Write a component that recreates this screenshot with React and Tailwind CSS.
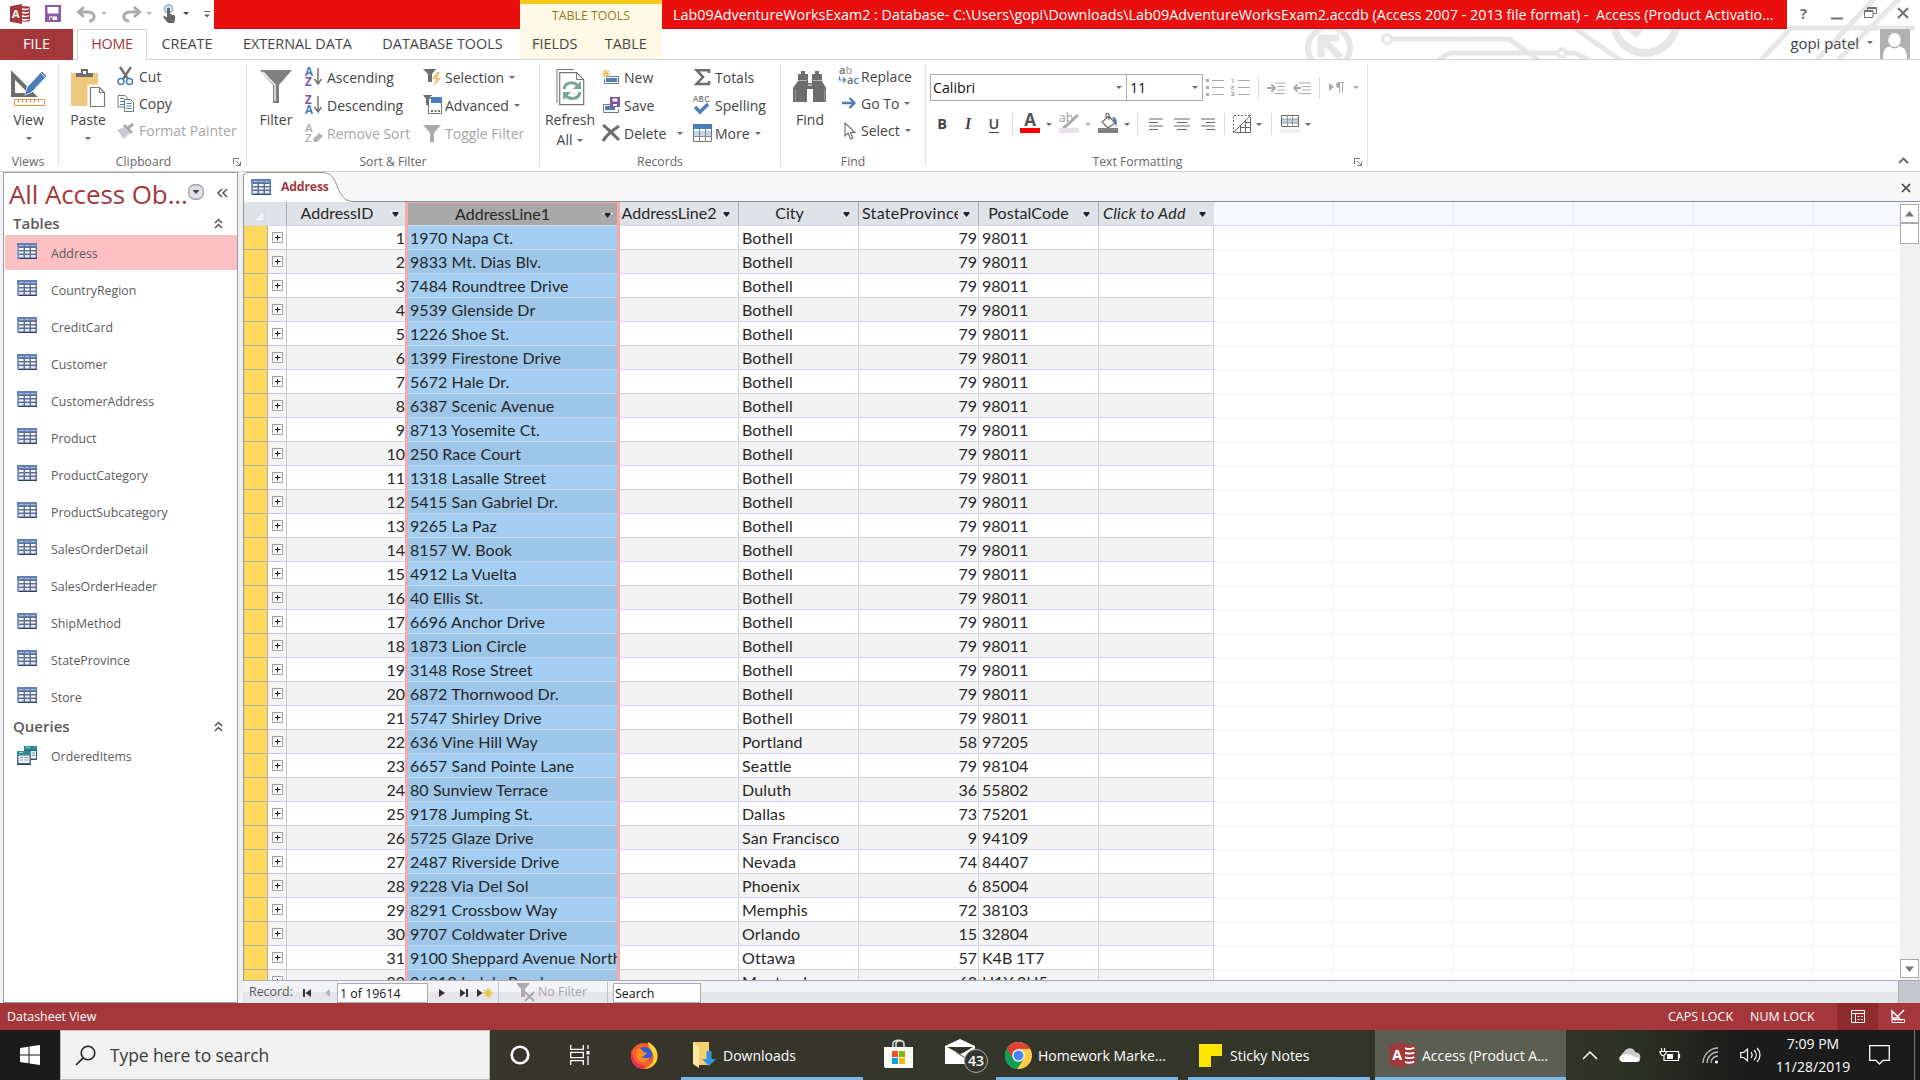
import React from "react";

const ADDRESSES = [
  ["1970 Napa Ct.", "Bothell", 79, "98011"],
  ["9833 Mt. Dias Blv.", "Bothell", 79, "98011"],
  ["7484 Roundtree Drive", "Bothell", 79, "98011"],
  ["9539 Glenside Dr", "Bothell", 79, "98011"],
  ["1226 Shoe St.", "Bothell", 79, "98011"],
  ["1399 Firestone Drive", "Bothell", 79, "98011"],
  ["5672 Hale Dr.", "Bothell", 79, "98011"],
  ["6387 Scenic Avenue", "Bothell", 79, "98011"],
  ["8713 Yosemite Ct.", "Bothell", 79, "98011"],
  ["250 Race Court", "Bothell", 79, "98011"],
  ["1318 Lasalle Street", "Bothell", 79, "98011"],
  ["5415 San Gabriel Dr.", "Bothell", 79, "98011"],
  ["9265 La Paz", "Bothell", 79, "98011"],
  ["8157 W. Book", "Bothell", 79, "98011"],
  ["4912 La Vuelta", "Bothell", 79, "98011"],
  ["40 Ellis St.", "Bothell", 79, "98011"],
  ["6696 Anchor Drive", "Bothell", 79, "98011"],
  ["1873 Lion Circle", "Bothell", 79, "98011"],
  ["3148 Rose Street", "Bothell", 79, "98011"],
  ["6872 Thornwood Dr.", "Bothell", 79, "98011"],
  ["5747 Shirley Drive", "Bothell", 79, "98011"],
  ["636 Vine Hill Way", "Portland", 58, "97205"],
  ["6657 Sand Pointe Lane", "Seattle", 79, "98104"],
  ["80 Sunview Terrace", "Duluth", 36, "55802"],
  ["9178 Jumping St.", "Dallas", 73, "75201"],
  ["5725 Glaze Drive", "San Francisco", 9, "94109"],
  ["2487 Riverside Drive", "Nevada", 74, "84407"],
  ["9228 Via Del Sol", "Phoenix", 6, "85004"],
  ["8291 Crossbow Way", "Memphis", 72, "38103"],
  ["9707 Coldwater Drive", "Orlando", 15, "32804"],
  ["9100 Sheppard Avenue North", "Ottawa", 57, "K4B 1T7"],
  ["26910 Indela Road", "Montreal", 63, "H1Y 2H5"],
];

const TABLES = [
  "Address", "CountryRegion", "CreditCard", "Customer", "CustomerAddress", "Product",
  "ProductCategory", "ProductSubcategory", "SalesOrderDetail", "SalesOrderHeader",
  "ShipMethod", "StateProvince", "Store",
];

function Icon({ w, h, className = "", children }) {
  return (
    <svg width={w} height={h} viewBox={`0 0 ${w} ${h}`} fill="none" className={`shrink-0 overflow-visible ${className}`}>
      {children}
    </svg>
  );
}

function Caret({ className = "text-[#6a6a6a]" }) {
  return (
    <Icon w={6} h={3} className={className}>
      <path d="M0 0h6L3 3z" fill="currentColor" />
    </Icon>
  );
}

/* ---------- title bar and tabs ---------- */

function AccessLogo({ w = 20, h = 20 }) {
  return (
    <svg width={w} height={h} viewBox="0 0 20 20" className="shrink-0 overflow-visible">
      <path d="M10 3.500c0-1.600 10-1.600 10 0v13c0 1.600-10 1.600-10 0z" fill="#a4373a" />
      <path d="M11 4.500c2 1.200 6.500 1.200 8 0M11 8c2 1.200 6.500 1.200 8 0M11 11.500c2 1.200 6.500 1.200 8 0M11 15c2 1.200 6.500 1.200 8 0" stroke="#fff" strokeWidth="1.500" fill="none" />
      <path d="M0 2.200L12 0v20L0 17.800z" fill="#a4373a" />
      <text x="5.900" y="14" fontSize="11" fontWeight="700" textAnchor="middle" fill="#fff" fontFamily="Open Sans">A</text>
    </svg>
  );
}

function CircuitArt() {
  return (
    <svg width="620" height="59" viewBox="1300 0 620 59" fill="none" stroke="#e7e7e7" strokeWidth="5" className="absolute right-0 top-0">
      <circle cx="1329" cy="48" r="21" strokeWidth="6" />
      <path d="M1321 57V38h18M1322 39l19 19" strokeWidth="7" />
      <circle cx="1387" cy="39" r="4.500" strokeWidth="3.500" />
      <path d="M1392 39h117l30 21M1438 60l12-7h107M1567 53h8l14 7M1570 25l50 35" />
      <circle cx="1562" cy="53" r="4" strokeWidth="3.500" />
      <circle cx="1645" cy="22" r="31" strokeWidth="8" />
      <path d="M1627 26l9 8 13-15" strokeWidth="6" />
      <path d="M1915 28h-124l-30 32M1875-2l-58 62M1900-2l-62 62" />
    </svg>
  );
}

function TitleBar() {
  return (
    <div className="flex h-[29px] relative">
      <div className="flex w-[214px] items-center pb-[2px] pl-[10px]">
        <AccessLogo />
        <Icon w={16} h={17} className="ml-[15px]">
          <path d="M0 0h16v17H0z" fill="#8c5aa8" />
          <path d="M2.500 2h11v6.500h-11zM4 11.500h8V15H4z" fill="#fff" />
          <path d="M5 12.500h2.500V16H5z" fill="#8c5aa8" />
        </Icon>
        <Icon w={19} h={16} className="ml-[16px]">
          <path d="M7 1L1.500 6 7 11M2 6h9c8 0 8 9 1 9" stroke="#ababab" strokeWidth="3" />
        </Icon>
        <span className="ml-[5px]"><Caret className="text-[#b5b5b5]" /></span>
        <Icon w={19} h={16} className="ml-[15px]">
          <path d="M12 1l5.500 5L12 11M17 6H8c-8 0-8 9-1 9" stroke="#ababab" strokeWidth="3" />
        </Icon>
        <span className="ml-[5px]"><Caret className="text-[#b5b5b5]" /></span>
        <Icon w={15} h={19} className="ml-[10px]">
          <circle cx="6.500" cy="5" r="3.800" stroke="#9cc3e0" strokeWidth="2.200" />
          <path d="M5 5c0-2 3-2 3 0v5l5 1.500v4L12 19H6l-5-6 1.500-1L5 13.500z" fill="#666" />
        </Icon>
        <span className="ml-[6px]"><Caret className="text-[#444]" /></span>
        <Icon w={6} h={7} className="ml-[15px] mt-[2px]">
          <path d="M0 .5h6" stroke="#666" /><path d="M0 3.500h6l-3 3z" fill="#666" />
        </Icon>
      </div>
      <div className="w-[306px] border-b border-[#c90c0c] bg-[#ea0f0f]" />
      <div className="flex w-[142px] justify-center border-t-4 border-[#f6c91b] bg-[#fff9e5] pt-[2px] text-[12.300px] leading-[19px] text-[#97791b]">
        TABLE TOOLS
      </div>
      <div className="flex w-[1125px] items-center whitespace-pre border-b border-[#c90c0c] bg-[#ea0f0f] pl-[11px] pt-[1px] text-[14.350px] text-white">
        {"Lab09AdventureWorksExam2 : Database- C:\\Users\\gopi\\Downloads\\Lab09AdventureWorksExam2.accdb (Access 2007 - 2013 file format) -  Access (Product Activatio..."}
      </div>
      <div className="flex flex-1 items-center pb-[3px] pl-[13px] text-[#717171]">
        <span className="w-[9px] text-[15px] font-bold leading-none">?</span>
        <Icon w={12} h={12} className="ml-[22px] mt-[2px]"><path d="M0 10.500h12" stroke="currentColor" strokeWidth="2" /></Icon>
        <Icon w={13} h={12} className="ml-[21px]"><path d="M3.500 3V.5h9v6H9M.5 3.500H9v7H.5zM.5 4.500H9M4 1.500h8" stroke="currentColor" /></Icon>
        <Icon w={12} h={12} className="ml-[20px]"><path d="M1 1l10 10M11 1L1 11" stroke="currentColor" strokeWidth="2" /></Icon>
      </div>
    </div>
  );
}

function RibbonTabs() {
  return (
    <div className="relative flex h-[31px] border-b border-[#d4d4d4] text-[14.400px] leading-[30px] text-[#444]">
      <div className="-mb-px w-[73px] bg-[#a4373a] text-center text-white">FILE</div>
      <div className="-mb-px ml-[4px] w-[70px] border-x border-t border-[#d4d4d4] bg-white text-center leading-[28px] tracking-[-0.300px] text-[#a4373a]">HOME</div>
      <div className="w-[80px] text-center">CREATE</div>
      <div className="w-[141px] text-center">EXTERNAL DATA</div>
      <div className="w-[149px] text-center">DATABASE TOOLS</div>
      <div className="ml-[3px] flex w-[142px] bg-[#fff9e5]">
        <div className="w-[71px] text-center">FIELDS</div>
        <div className="w-[74px] text-center">TABLE</div>
      </div>
      <div className="flex flex-1 items-start justify-end pr-[10px]">
        <span className="text-[14.900px] leading-[29px]">gopi patel</span>
        <span className="ml-[8px] mt-[12px] flex"><Caret /></span>
        <Icon w={30} h={30} className="ml-[7px]">
          <path d="M0 0h30v30H0z" fill="#b1b1b1" />
          <ellipse cx="14.500" cy="11" rx="6.200" ry="7" fill="#fff" />
          <path d="M3 30c0-9 2-12 7-12.500 3 2.500 6 2.500 9 0 5 .5 8 3.500 8 12.500z" fill="#fff" />
        </Icon>
      </div>
    </div>
  );
}

/* ---------- ribbon ---------- */

function Group({ className, label, launcher, children }) {
  return (
    <div className={`flex h-[102px] flex-col border-r border-[#e1e1e1] ${className}`}>
      <div className="flex h-[88px] shrink-0 items-start">{children}</div>
      <div className="relative text-center text-[12.200px] leading-[20px] text-[#666]">
        {label}
        {launcher && (
          <Icon w={8} h={8} className="absolute right-[5px] top-[6px]">
            <path d="M.5 6V.5H6M3 3l4 4M7.500 3.500v4h-4" stroke="#777" />
          </Icon>
        )}
      </div>
    </div>
  );
}

function BigButton({ className, icon, label, second, caret }) {
  return (
    <div className={`flex shrink-0 flex-col items-center text-[14px] leading-[20px] text-[#444] ${className}`}>
      <div className="flex h-[42px] items-start">{icon}</div>
      <span className="whitespace-nowrap">{label}</span>
      {second && <span className="flex items-center gap-[5px]">{second} <Caret /></span>}
      {caret && <span className="mt-[7px]"><Caret /></span>}
    </div>
  );
}

function SmallButton({ icon, label, caret, wideCaret, disabled }) {
  return (
    <div className={`flex h-full items-center whitespace-nowrap pb-[2px] text-[14px] ${disabled ? "text-[#a6a6a6]" : "text-[#444]"}`}>
      <span className="flex w-[22px] shrink-0 items-center">{icon}</span>
      {label}
      {caret && <span className={wideCaret ? "ml-[11px]" : "ml-[5px]"}><Caret /></span>}
    </div>
  );
}

const viewIcon = (
  <Icon w={36} h={38}>
    <path d="M2 7l20 20H2z" stroke="#6d6d6d" strokeWidth="4" />
    <path d="M14 27l2-8L31 3l5 5-15 16z" fill="#4a7ebb" stroke="#fff" />
    <path d="M14 27l2-7 4 4z" fill="#4a7ebb" /><path d="M29 4l5 5" stroke="#fff" />
    <path d="M3.500 31.500h30v6h-30zM7.500 31.500v3M11.500 31.500v3M15.500 31.500v3M19.500 31.500v3M23.500 31.500v3M27.500 31.500v3" stroke="#e8914a" />
  </Icon>
);
const pasteIcon = (
  <Icon w={35} h={40}>
    <path d="M0 5h27v33H0z" fill="#edc87e" />
    <path d="M5 9V5h5V1h7v4h5v4z" fill="#6d6d6d" /><path d="M12 3h3v3h-3z" fill="#fff" />
    <path d="M18.500 18.500h10l5 5v15h-15z" fill="#fff" stroke="#fff" strokeWidth="4" />
    <path d="M19.500 19.500h9l5 5v14h-14zM28.500 19.500v5h5" fill="#fff" stroke="#777" strokeWidth="1.200" />
  </Icon>
);
const cutIcon = (
  <Icon w={17} h={19}>
    <path d="M3 0l8 12M14 0L6 12" stroke="#6d6d6d" strokeWidth="2.300" />
    <circle cx="4" cy="14.500" r="3" stroke="#4a7ebb" strokeWidth="1.500" /><circle cx="12.500" cy="14.500" r="3" stroke="#4a7ebb" strokeWidth="1.500" />
  </Icon>
);
const copyIcon = (
  <Icon w={18} h={19}>
    <path d="M1 1.500h7l2 2V13H1z" fill="#fff" stroke="#777" /><path d="M3 4.500h4M3 7.500h4M3 10.500h4" stroke="#4a7ebb" />
    <path d="M7.500 5.500h6l3 3v9h-9z" fill="#fff" stroke="#777" /><path d="M9.500 9.500h5M9.500 12h5M9.500 14.500h5" stroke="#4a7ebb" />
  </Icon>
);
const painterIcon = (
  <Icon w={17} h={16}>
    <path d="M0 7l7-3 6 6-6 6z" fill="#cfcad2" /><path d="M6 3l2-2 8 8-2 2z" fill="#aaa" /><path d="M11 5l5-4" stroke="#aaa" strokeWidth="3" />
  </Icon>
);
const filterIcon = (
  <Icon w={32} h={34}>
    <path d="M0 0h32L19 15v18h-6V15z" fill="#808080" /><path d="M3 2l12 13v16" stroke="#fff" strokeWidth="1.300" />
  </Icon>
);
function SortIcon({ top, bottom, topColor, bottomColor }) {
  return (
    <Icon w={18} h={20}>
      <text x="0" y="9" fontSize="11.500" fontWeight="700" fill={topColor} fontFamily="Open Sans">{top}</text>
      <text x="0" y="19" fontSize="11.500" fontWeight="700" fill={bottomColor} fontFamily="Open Sans">{bottom}</text>
      <path d="M13 1v15M9.500 12l3.500 5 3.500-5" stroke="#6d6d6d" strokeWidth="1.400" />
    </Icon>
  );
}
const removeSortIcon = (
  <Icon w={18} h={20}>
    <text x="0" y="9" fontSize="11.500" fontWeight="600" fill="#ababab" fontFamily="Open Sans">A</text>
    <text x="0" y="19" fontSize="11.500" fontWeight="600" fill="#ababab" fontFamily="Open Sans">Z</text>
    <path d="M8 16l6-6 4 3-6 6H9z" fill="#b3b3b3" />
  </Icon>
);
const selectionIcon = (
  <Icon w={19} h={19}>
    <path d="M0 1h13L9 6v8H5V6z" fill="#6d6d6d" /><path d="M14 4l-5 7h4l-3 8 8-9h-4l3-6z" fill="#edc070" />
  </Icon>
);
const advancedIcon = (
  <Icon w={19} h={20}>
    <path d="M5.500 3.500h13v15h-13z" fill="#fff" stroke="#777" /><path d="M8 2h11v6H8z" fill="#4a7ebb" />
    <path d="M0 0h9L6 4v6H3V4z" fill="#6d6d6d" /><path d="M8 15h2v2H8zM11.500 15h2v2h-2zM15 15h2v2h-2z" fill="#777" />
  </Icon>
);
const toggleIcon = (
  <Icon w={18} h={17}><path d="M0 0h18l-7 8v9H7V8z" fill="#ababab" /></Icon>
);
const refreshIcon = (
  <Icon w={29} h={38}>
    <path d="M1 35V1.500h17" stroke="#777" /><path d="M3.700 4.700h17l7 7v25h-24z" fill="#fff" stroke="#777" strokeWidth="1.200" /><path d="M20.500 4.500v7h7" stroke="#777" />
    <path d="M8 21c1-7 10-8 14-3M24 24c-1 8-11 8-15 3" stroke="#77a896" strokeWidth="3" />
    <path d="M25 13v8h-8zM7 32v-8h8z" fill="#77a896" />
  </Icon>
);
const newIcon = (
  <Icon w={17} h={16}>
    <path d="M4.500 7.500h12v7h-14V10" stroke="#777" fill="#fff" /><path d="M4 9h11v4H4z" fill="#4a7ebb" />
    <path d="M4 0v9M0 4.500h8M1 1.500l6 6M7 1.500l-6 6" stroke="#edc070" strokeWidth="1.300" />
  </Icon>
);
const saveRecIcon = (
  <Icon w={19} h={17}>
    <path d="M8 7.500H1.500v8h15V12" stroke="#777" fill="#fff" /><path d="M3 9h10v4H3z" fill="#4a7ebb" />
    <path d="M8 0h10v10H8z" fill="#8052a0" /><path d="M10.500 1.500h5v3h-5zM11 7h4v2h-4z" fill="#fff" />
  </Icon>
);
const deleteIcon = (
  <Icon w={19} h={18}><path d="M1 1c5 4 10 9 16 15M17 2C11 6 5 10 1 17" stroke="#6d6d6d" strokeWidth="3" /></Icon>
);
const sigmaIcon = (
  <Icon w={17} h={17} className="ml-[1px]"><path d="M15 4V1.200H2.500L9 8l-6.500 7H15v-3" stroke="#6d6d6d" strokeWidth="2.500" /></Icon>
);
const spellIcon = (
  <Icon w={18} h={20}>
    <text x="0" y="7" fontSize="8" fontWeight="600" letterSpacing="0.300" fill="#777" fontFamily="Open Sans">ABC</text>
    <path d="M2 12l5 5 8-8" stroke="#4a7ebb" strokeWidth="3.500" />
  </Icon>
);
const moreIcon = (
  <Icon w={19} h={18}>
    <path d="M.5.500h18v17H.5z" fill="#fff" stroke="#777" /><path d="M0 0h19v5H0z" fill="#4a7ebb" /><path d="M1 7h17v5H1z" fill="#c3d5ea" />
    <path d="M6.500 5v12M12.500 5v12M0 12.500h19" stroke="#888" />
  </Icon>
);
const findIcon = (
  <Icon w={34} h={32}>
    <path d="M5 3h3V0h4v3h3v9h4V3h3V0h4v3h3v7l4 7v14H20V18h-6v13H0V17l5-7z" fill="#6d6d6d" />
    <path d="M5 9.500h9M20 9.500h9" stroke="#fff" opacity=".5" /><path d="M15 14h4" stroke="#fff" /><path d="M2.500 18v12M31.500 18v12" stroke="#999" />
  </Icon>
);
const replaceIcon = (
  <Icon w={21} h={20}>
    <text x="0" y="8" fontSize="11" fontWeight="600" fill="#6d6d6d" fontFamily="Open Sans">a<tspan fill="#aaa">b</tspan></text>
    <text x="8" y="18" fontSize="11" fontWeight="600" fill="#6d6d6d" fontFamily="Open Sans">a<tspan fill="#4a7ebb">c</tspan></text>
    <path d="M.5 10.500v3.500h5M4 11.500L6.500 14 4 16.500" stroke="#4a7ebb" strokeWidth="1.200" />
  </Icon>
);
const gotoIcon = (
  <Icon w={15} h={12} className="ml-[3px]"><path d="M0 6h12M7.500 1l5 5-5 5" stroke="#4a7ebb" strokeWidth="2.300" /></Icon>
);
const selectIcon = (
  <Icon w={13} h={18} className="ml-[5px]"><path d="M1 1v13l3-3 2.500 6 2.300-1L6.500 10.500H11z" stroke="#6d6d6d" strokeWidth="1.100" /></Icon>
);

function Slot({ className, children }) {
  return <span className={`flex h-full shrink-0 items-center justify-center ${className}`}>{children}</span>;
}
function Divider({ className }) {
  return <span className={`h-[22px] w-px shrink-0 bg-[#dadada] ${className}`} />;
}

function TextFormatting() {
  return (
    <div className="flex flex-col pl-[4px] pt-[10px]">
      <div className="flex h-[27px] items-center">
        <div className="flex h-[27px] w-[197px] items-center justify-between border border-[#ababab] pl-[2px] pr-[4px] text-[14.200px] text-[#111]">
          Calibri <Caret />
        </div>
        <div className="-ml-px flex h-[27px] w-[77px] items-center justify-between border border-[#ababab] pl-[3px] pr-[4px] text-[14.200px] text-[#111]">
          11 <Caret />
        </div>
        <Icon w={18} h={18} className="ml-[3px] -mt-[1px]">
          <path d="M6 2.500h12M6 9.500h12M6 16.500h12" stroke="#ababab" strokeWidth="1.200" /><path d="M0 1h3v3H0zM0 8h3v3H0zM0 15h3v3H0z" fill="#ababab" />
        </Icon>
        <Icon w={19} h={18} className="ml-[7px] -mt-[1px]">
          <path d="M7 2.500h12M7 9.500h12M7 16.500h12" stroke="#ababab" strokeWidth="1.200" />
          <path d="M.5 1.500H2V5M.5 8h2v1.500h-2V11.500h3M0 14.500h3v3H0M1 16h2" stroke="#ababab" />
        </Icon>
        <Divider className="ml-[8px]" />
        <Icon w={18} h={12} className="ml-[8px]">
          <path d="M8 1h10M10 4.500h8M10 8h8M8 11.500h10" stroke="#ababab" /><path d="M0 6h8M4.500 2.500L8 6 4.500 9.500" stroke="#ababab" strokeWidth="2" />
        </Icon>
        <Icon w={18} h={12} className="ml-[8px]">
          <path d="M6 1h12M9 4.500h9M9 8h9M6 11.500h12" stroke="#ababab" /><path d="M8 6H1M4.500 2.500L1 6l3.500 3.500" stroke="#ababab" strokeWidth="2" />
        </Icon>
        <Divider className="ml-[8px]" />
        <Icon w={15} h={11} className="ml-[9px]">
          <path d="M0 1l5 4-5 4zM10 0c-4 0-4 6 0 6z" fill="#ababab" /><path d="M10.500 0v11M13.500 0v11M9 .5h6" stroke="#ababab" />
        </Icon>
        <span className="ml-[9px] -mt-[1px]"><Caret className="text-[#ababab]" /></span>
      </div>
      <div className="mt-[12px] flex h-[22px] items-center text-[#444]">
        <Slot className="w-[24px] text-[14.500px] font-bold">B</Slot>
        <Slot className="w-[28px] font-['Liberation_Serif'] text-[16px] font-bold italic">I</Slot>
        <Slot className="w-[24px] text-[14.500px] font-semibold"><span className="border-b border-[#444] leading-[17px]">U</span></Slot>
        <Divider className="ml-[6px]" />
        <Icon w={20} h={22} className="ml-[7px]">
          <text x="10" y="13" textAnchor="middle" fontSize="17" fontWeight="700" fill="#555" fontFamily="Open Sans">A</text><path d="M0 15h20v5H0z" fill="#fe0000" />
        </Icon>
        <span className="ml-[6px]"><Caret /></span>
        <Icon w={20} h={22} className="ml-[7px]">
          <text x="0" y="9" fontSize="12" fill="#999" fontFamily="Open Sans">ab</text><path d="M19 2L7 13l-3 2" stroke="#aaa" strokeWidth="3" /><path d="M0 15h20v5H0z" fill="#e6e2e8" />
        </Icon>
        <span className="ml-[6px]"><Caret className="text-[#ababab]" /></span>
        <Icon w={20} h={22} className="ml-[7px]">
          <path d="M4 9l7-6 6 7-7 5zM8 6V1.500c0-1.500 3-1.500 3 0V7" stroke="#666" strokeWidth="1.200" /><path d="M14 4c5 0 6 5 4 10-1-5-2-6-4-10z" fill="#4a7ebb" /><path d="M0 15h20v5H0z" fill="#808080" />
        </Icon>
        <span className="ml-[6px]"><Caret /></span>
        <Divider className="ml-[7px]" />
        <Icon w={14} h={12} className="ml-[11px]"><path d="M0 1h14M0 4.500h9M0 8h14M0 11.500h9" stroke="#666" /></Icon>
        <Icon w={16} h={12} className="ml-[11px]"><path d="M0 1h16M3 4.500h10M0 8h16M3 11.500h10" stroke="#666" /></Icon>
        <Icon w={14} h={12} className="ml-[11px]"><path d="M0 1h14M5 4.500h9M0 8h14M5 11.500h9" stroke="#666" /></Icon>
        <Divider className="ml-[9px]" />
        <Icon w={18} h={18} className="ml-[8px]">
          <path d="M.5 17.500V.5h17" stroke="#666" strokeDasharray="2 1.500" /><path d="M0 18L18 0M17.500 2v15.500H2M12.500 6v11M7.500 11v6M7 12.500h10M12 7.500h5" stroke="#666" />
        </Icon>
        <span className="ml-[5px]"><Caret /></span>
        <Divider className="ml-[9px]" />
        <Icon w={20} h={20} className="ml-[8px]">
          <path d="M1.500 1.500h17v11h-17z" fill="#fff" stroke="#666" /><path d="M2 5h16v4H2z" fill="#bcd3ea" /><path d="M7.500 1v12M12.500 1v12M1 5h18M1 9h18" stroke="#888" strokeWidth=".8" /><path d="M0 15h20v4H0z" fill="#eee" />
        </Icon>
        <span className="ml-[5px]"><Caret /></span>
      </div>
    </div>
  );
}

function Ribbon() {
  return (
    <div className="flex h-[112px] border-b border-[#d4d4d4] bg-white pt-[4px]">
      <Group className="w-[59px]" label={<span className="pr-[2px]">Views</span>}>
        <BigButton className="w-[57px] pt-[4px]" icon={viewIcon} label="View" caret />
      </Group>
      <Group className="w-[188px]" label={<span className="pr-[18px]">Clipboard</span>} launcher>
        <BigButton className="w-[57px] pl-[1px] pt-[4px]" icon={pasteIcon} label="Paste" caret />
        <div className="flex flex-col pl-[1px]">
          <div className="h-[26px]"><SmallButton icon={cutIcon} label="Cut" /></div>
          <div className="h-[28px]"><SmallButton icon={copyIcon} label="Copy" /></div>
          <div className="h-[27px]"><SmallButton icon={painterIcon} label="Format Painter" disabled /></div>
        </div>
      </Group>
      <Group className="w-[293px]" label="Sort & Filter">
        <BigButton className="w-[58px] pt-[4px]" icon={<span className="pt-[2px]">{filterIcon}</span>} label="Filter" />
        <div className="flex w-[118px] flex-col">
          <div className="h-[28px]"><SmallButton icon={<SortIcon top="A" bottom="Z" topColor="#4a7ebb" bottomColor="#8052a0" />} label="Ascending" /></div>
          <div className="h-[28px]"><SmallButton icon={<SortIcon top="Z" bottom="A" topColor="#8052a0" bottomColor="#4a7ebb" />} label="Descending" /></div>
          <div className="h-[28px]"><SmallButton icon={removeSortIcon} label="Remove Sort" disabled /></div>
        </div>
        <div className="flex flex-col">
          <div className="h-[28px]"><SmallButton icon={selectionIcon} label="Selection" caret /></div>
          <div className="h-[28px]"><SmallButton icon={advancedIcon} label="Advanced" caret /></div>
          <div className="h-[28px]"><SmallButton icon={toggleIcon} label="Toggle Filter" disabled /></div>
        </div>
      </Group>
      <Group className="w-[241px]" label="Records">
        <BigButton className="w-[60px] pt-[4px]" icon={refreshIcon} label="Refresh" second="All" />
        <div className="flex w-[93px] flex-col pl-[2px]">
          <div className="h-[28px]"><SmallButton icon={newIcon} label="New" /></div>
          <div className="h-[28px]"><SmallButton icon={saveRecIcon} label="Save" /></div>
          <div className="h-[28px]"><SmallButton icon={deleteIcon} label="Delete" caret wideCaret /></div>
        </div>
        <div className="flex flex-col">
          <div className="h-[28px]"><SmallButton icon={sigmaIcon} label="Totals" /></div>
          <div className="h-[28px]"><SmallButton icon={spellIcon} label="Spelling" /></div>
          <div className="h-[28px]"><SmallButton icon={moreIcon} label="More" caret /></div>
        </div>
      </Group>
      <Group className="w-[145px]" label="Find">
        <BigButton className="w-[58px] pt-[4px]" icon={<span className="pt-[3px]">{findIcon}</span>} label="Find" />
        <div className="flex flex-col">
          <div className="h-[26px]"><SmallButton icon={replaceIcon} label="Replace" /></div>
          <div className="h-[28px]"><SmallButton icon={gotoIcon} label="Go To" caret /></div>
          <div className="h-[27px]"><SmallButton icon={selectIcon} label="Select" caret /></div>
        </div>
      </Group>
      <Group className="w-[442px]" label={<span className="pr-[18px]">Text Formatting</span>} launcher>
        <TextFormatting />
      </Group>
      <div className="flex flex-1 items-end justify-end pb-[7px] pr-[11px]">
        <Icon w={11} h={7}><path d="M1 6l4.500-4.500L10 6" stroke="#666" strokeWidth="1.800" /></Icon>
      </div>
    </div>
  );
}

/* ---------- navigation pane ---------- */

function TableIcon() {
  return (
    <Icon w={20} h={16}>
      <path d="M0 0h20v16H0z" fill="#5d6f96" /><path d="M0 0h20v4H0z" fill="#6580b5" /><path d="M0 4h1.500v12H0z" fill="#8fa5cf" />
      <path d="M2 2h4.500v1H2zM8 2h4.500v1H8zM14 2h4.500v1H14z" fill="#a9bbdd" />
      <path d="M2 5h4.500v2H2zM8 5h4.500v2H8zM14 5h4.500v2H14z" fill="#fff" />
      <path d="M2 8.500h4.500v2H2zM8 8.500h4.500v2H8zM14 8.500h4.500v2H14z" fill="#f4f7fc" />
      <path d="M2 12h4.500v2.500H2zM8 12h4.500v2.500H8zM14 12h4.500v2.500H14z" fill="#dfe8f5" />
      <path d="M2 15.500h18" stroke="#2f3f5c" />
    </Icon>
  );
}

function QueryIcon() {
  return (
    <Icon w={20} h={19}>
      <path d="M7 0h13v14H7z" fill="#3c5a72" /><path d="M7 0h13v4H7z" fill="#2c8c8c" /><path d="M8 5h11v7.500H8z" fill="#eef4fb" />
      <path d="M0 5h14v14H0z" fill="#4a6892" /><path d="M0 5h14v4H0z" fill="#2f9090" /><path d="M1.500 9.500h11v7.500h-11z" fill="#f4f8fd" />
      <path d="M3 11.500h3M7.500 11.500h4M3 14h3M7.500 14h4M15 7h3M15 9.500h3" stroke="#7f93b5" /><path d="M0 18.500h14" stroke="#26466a" />
      <path d="M2 6.500h4M9 1.500h4" stroke="#8fd0cc" />
    </Icon>
  );
}

function DoubleUp() {
  return <Icon w={9} h={11}><path d="M1 5l3.500-3.500L8 5M1 10l3.500-3.500L8 10" stroke="#555" strokeWidth="1.500" /></Icon>;
}

function SectionHeading({ children }) {
  return (
    <div className="flex h-[22px] items-center justify-between pl-[9px] pr-[14px]">
      <span className="text-[15px] font-semibold text-[#5a5a5a]">{children}</span>
      <DoubleUp />
    </div>
  );
}

function NavPane() {
  return (
    <div className="ml-[3px] flex w-[235px] flex-col border border-[#9a9ba6] bg-white text-[#5c5c5c]">
      <div className="flex h-[39px] items-center pl-[5px] text-[26px] tracking-[-0.100px] text-[#a4373a]">
        <span className="w-[179px] whitespace-nowrap pt-[4px]">All Access Ob...</span>
        <Icon w={16} h={16} className="-mt-[1px]">
          <rect x=".7" y=".7" width="14.600" height="14.600" rx="6" fill="#e0e2e8" stroke="#a2a5b0" strokeWidth="1.400" /><path d="M4.500 6h7l-3.500 4z" fill="#444" />
        </Icon>
        <Icon w={11} h={10} className="ml-[13px] mt-[1px]"><path d="M5 1L1 5l4 4M10 1L6 5l4 4" stroke="#555" strokeWidth="1.500" /></Icon>
      </div>
      <SectionHeading>Tables</SectionHeading>
      <div className="pt-px">
        {TABLES.map((name, i) => (
          <div key={name} className={`mb-[2px] ml-px flex h-[35px] items-start pl-[12px] pt-[8px] ${i === 0 ? "bg-[#fdc0c2]" : ""}`}>
            <TableIcon />
            <span className="ml-[14px] pt-[2px] text-[12.350px] leading-[17px]">{name}</span>
          </div>
        ))}
      </div>
      <div className="-mt-[1px]"><SectionHeading>Queries</SectionHeading></div>
      <div className="ml-px mt-[9px] flex items-start pl-[12px]">
        <QueryIcon />
        <span className="ml-[14px] pt-[2px] text-[12.350px] leading-[17px]">OrderedItems</span>
      </div>
    </div>
  );
}

/* ---------- datasheet ---------- */

const GRID = "grid grid-cols-[24px_19px_118px_3px_209px_3px_119px_120px_120px_120px_115px_120px_120px_120px_120px_120px_1fr]";

function HeadCaret() {
  return <Icon w={11} h={5}><path d="M0 0h11L5.500 5z" fill="#fff" /><path d="M2.500 0h6v1.500L5.500 5l-3-3.500z" fill="#1d262c" /></Icon>;
}

function Head({ className = "", textClass = "text-center", inset, children }) {
  return (
    <div className={`flex items-center overflow-hidden ${className}`}>
      <span className={`min-w-0 flex-1 overflow-hidden whitespace-nowrap pb-[2px] leading-[21px] ${textClass}`}>{children}</span>
      <span className={`flex w-[20px] shrink-0 justify-center pt-[2px] ${inset ? "pr-[3px]" : ""}`}><HeadCaret /></span>
    </div>
  );
}

function Datasheet() {
  const edge = "border-r border-[#cdd3e4]";
  const faint = "border-r border-[#f1f2f8]";
  const head = "border-r border-[#a9adb5] bg-[#dfe2e6]";
  return (
    <div className="h-[778px] w-[1656px] overflow-hidden bg-white font-['Lato'] text-[16px] text-[#262626]">
      <div className={`${GRID} h-[24px] grid-rows-[23px] border-b border-[#d3d7e4]`}>
        <div className="col-span-2 flex items-end border-r border-[#a9adb5] bg-[#dfe2e6] pb-[4px] pl-[9px]">
          <Icon w={11} h={10}><path d="M0 10L11 0v10z" fill="#f1f3f7" stroke="#c6cbd8" strokeWidth=".7" /></Icon>
        </div>
        <Head className="bg-[#dfe2e6]" textClass="pl-[2px] text-center">AddressID</Head>
        <div className="-mb-px bg-[#f7a8ab]" />
        <Head className="border-t border-[#f7a8ab] bg-[#a9a9a9]">AddressLine1</Head>
        <div className="-mb-px bg-[#f7a8ab]" />
        <Head inset className={head}>AddressLine2</Head>
        <Head inset className={head} textClass="pl-[2px] text-center">City</Head>
        <Head inset className={head} textClass="pl-[3px] tracking-[0.300px]">StateProvince</Head>
        <Head inset className={head} textClass="text-center tracking-[0.100px]">PostalCode</Head>
        <Head inset className="bg-[#dfe2e6]" textClass="pl-[4px] italic tracking-[0.250px]">Click to Add</Head>
        {[0, 1, 2, 3, 4].map((i) => <div key={i} className="border-r border-[#ececf6] bg-[#f7f7fe]" />)}
        <div className="bg-[#f7f7fe]" />
      </div>
      {ADDRESSES.map(([line, city, state, zip], i) => {
        const odd = i % 2 === 1;
        const bg = odd ? "bg-[#f3f3f3]" : "bg-white";
        const line1 = odd ? "bg-[#9dc6e9]" : "bg-[#a4cff2]";
        const rule = "border-b border-[#cdd3e4]";
        return (
          <div key={line} className={`${GRID} h-[24px] grid-rows-[24px] leading-[23px] whitespace-nowrap`}>
            <div className="border-b border-r border-[#aeb0b2] bg-[#ffd95f]" />
            <div className={`flex items-center justify-center border-b border-r border-[#c3c8d6] ${bg}`}>
              <Icon w={11} h={11}><path d="M.5.500h10v10H.5z" fill="#fff" stroke="#a0a0a0" /><path d="M3 5.500h5.500M5.500 3v5.500" stroke="#111" /></Icon>
            </div>
            <div className={`${rule} ${bg} text-right`}>{i + 1}</div>
            <div className="bg-[#f7a8ab]" />
            <div className={`overflow-hidden border-b border-[#c5d6ea] pl-[2px] tracking-[0.080px] ${line1}`}>{line}</div>
            <div className="bg-[#f7a8ab]" />
            <div className={`${rule} ${edge} ${bg}`} />
            <div className={`${rule} ${edge} ${bg} pl-[3px] tracking-[0.150px]`}>{city}</div>
            <div className={`${rule} ${edge} ${bg} pr-[1px] text-right`}>{state}</div>
            <div className={`${rule} ${edge} ${bg} pl-[3px]`}>{zip}</div>
            <div className={`${rule} ${edge} ${bg}`} />
            {[0, 1, 2, 3, 4].map((k) => <div key={k} className={`border-b ${faint}`} />)}
            <div className="border-b border-[#f1f2f8]" />
          </div>
        );
      })}
    </div>
  );
}

function ScrollButton({ up }) {
  return (
    <div className="flex h-[19px] w-[19px] items-center justify-center border border-[#ababab] bg-white">
      <Icon w={9} h={6}><path d={up ? "M0 5.500h9L4.500 0z" : "M0 .5h9L4.500 6z"} fill="#777" /></Icon>
    </div>
  );
}

function RecordBar() {
  return (
    <div className="flex h-[23px] border-t border-[#a9aab4] text-[12.400px] text-[#555]">
      <div className="flex w-[1655px] items-center bg-linear-to-b from-[#f3f4f7] from-50% to-[#e5e6ea] to-50% pl-[6px] pt-[1px]">
        <span className="w-[51px]">Record:</span>
        <Icon w={8} h={8} className="ml-[3px]"><path d="M8 0v8L2.500 4zM0 0h2v8H0z" fill="#333" /></Icon>
        <Icon w={5} h={8} className="ml-[14px]"><path d="M5 0v8L0 4z" fill="#b5b5bd" /></Icon>
        <div className="ml-[7px] h-[20px] w-[91px] border border-[#ababb3] bg-white pl-[2px] leading-[19px] text-[#111]">1 of 19614</div>
        <Icon w={6} h={8} className="ml-[11px]"><path d="M0 0v8l6-4z" fill="#333" /></Icon>
        <Icon w={8} h={8} className="ml-[15px]"><path d="M0 0v8l5.500-4zM6 0h2v8H6z" fill="#333" /></Icon>
        <Icon w={16} h={10} className="ml-[9px]"><path d="M0 1v8l5.500-4z" fill="#333" /><path d="M11 0v10M6 5h10M7.500 1.500l7 7M14.500 1.500l-7 7" stroke="#e8c53d" strokeWidth="1.400" /></Icon>
        <span className="ml-[5px] h-full w-px bg-[#c4c4cc]" />
        <Icon w={19} h={19} className="ml-[17px]"><path d="M0 0h14L9 6v8H5V6z" fill="#ababb0" /><path d="M9 9l9 9M18 9l-9 9" stroke="#ababb0" strokeWidth="2" /></Icon>
        <span className="ml-[3px] w-[69px] text-[#a6a6aa]">No Filter</span>
        <span className="h-full w-px bg-[#c4c4cc]" />
        <div className="ml-[5px] h-[20px] w-[88px] border border-[#ababb3] bg-white pl-[1px] leading-[19px] text-[#111]">Search</div>
      </div>
      <div className="flex-1 border-l border-[#a9aab4] bg-[#c6c7ce]" />
    </div>
  );
}

function DocumentArea() {
  return (
    <div className="ml-[5px] flex flex-1 flex-col">
      <div className="relative flex h-[29px] items-center justify-between bg-[#f7f7f7]">
        <Icon w={110} h={30} className="absolute left-0 top-0 z-10">
          <path d="M.5 30V5C.5 2 2 .5 5 .5h75c17 0 12 28 28 28.500v1z" fill="#fff" /><path d="M.5 30V5C.5 2 2 .5 5 .5h75c17 0 12 28 28 28.500" stroke="#9a9284" />
        </Icon>
        <div className="relative z-20 flex items-center pl-[8px]">
          <TableIcon />
          <span className="ml-[10px] pt-[2px] text-[12.300px] font-bold tracking-[-0.200px] text-[#a4373a]">Address</span>
        </div>
        <Icon w={8} h={8} className="mr-[10px] mt-[2px]"><path d="M0 0l8 8M8 0L0 8" stroke="#444" strokeWidth="1.700" /></Icon>
      </div>
      <div className="flex h-[779px] border-l border-t border-[#8a8f9c]">
        <Datasheet />
        <div className="flex flex-1 flex-col justify-between bg-[#f1f1f1] pb-[2px]">
          <div className="bg-[#f7f7fe] pt-[2px]">
            <ScrollButton up />
            <div className="h-[21px] w-[19px] border border-[#ababab] bg-white" />
          </div>
          <ScrollButton />
        </div>
      </div>
      <RecordBar />
    </div>
  );
}

/* ---------- status bar and taskbar ---------- */

function StatusBar() {
  return (
    <div className="flex h-[27px] items-center bg-[#a4373a] pl-[7px] text-[12.400px] text-white">
      <span className="flex-1 pt-[1px]">Datasheet View</span>
      <span className="w-[82px] pt-[1px] tracking-[0.050px]">CAPS LOCK</span>
      <span className="w-[87px] pt-[1px] tracking-[0.050px]">NUM LOCK</span>
      <div className="flex h-full w-[41px] items-center justify-center bg-[#8f2a2d] pb-[1px]">
        <Icon w={14} h={13}><path d="M.5.500h13v12H.5zM.5 3.500h13M4.500 3.500v9M6.500 6.500h2M10 6.500h2M6.500 9.500h2M10 9.500h2" stroke="#fff" /></Icon>
      </div>
      <Icon w={14} h={13} className="-mt-[1px] ml-[13px] mr-[15px]">
        <path d="M1 1v7h7zM13 0L6 7" stroke="#fff" strokeWidth="1.500" /><path d="M1 9.500h12.500v3H1zM4 10v1M7 10v1M10 10v1" stroke="#fff" />
      </Icon>
    </div>
  );
}

function Task({ className, active, icon, children }) {
  return (
    <div className={`flex h-full shrink-0 items-center border-b-[3px] border-[#76b9ed] pt-[3px] text-[14px] text-white ${active ? "bg-[#5b5e50]" : ""} ${className}`}>
      {icon}
      <span className="whitespace-nowrap">{children}</span>
    </div>
  );
}

function Taskbar() {
  return (
    <div className="flex h-[50px] items-center bg-[linear-gradient(90deg,#1b1b1b_0%,#1b1b1b_3%,#38352a_25%,#34362a_60%,#2f3326_84%,#1b1b1b_91%)]">
      <Icon w={20} h={20} className="ml-[20px]">
        <path d="M0 3l8.500-1.300v7.800H0zM9.500 1.500L20 0v9.500H9.500zM0 10.500h8.500v7.800L0 17zM9.500 10.500H20V20L9.500 18.500z" fill="#fff" />
      </Icon>
      <div className="ml-[20px] flex h-[50px] w-[430px] items-center border border-[#bdbdbd] bg-[#f2f2f2] pl-[14px] text-[17.500px] tracking-[-0.100px] text-[#3a3a3a]">
        <Icon w={21} h={21}><circle cx="13" cy="8" r="6.800" stroke="#222" strokeWidth="1.600" /><path d="M8.200 12.800L1 20" stroke="#222" strokeWidth="1.700" /></Icon>
        <span className="ml-[14px]">Type here to search</span>
      </div>
      <Icon w={20} h={20} className="ml-[20px]"><circle cx="10" cy="10" r="8.300" stroke="#fff" strokeWidth="2.600" /></Icon>
      <Icon w={20} h={20} className="ml-[40px]">
        <path d="M.7 0v4.300h12.600V0M.7 7.300h12.600v5.400H.7zM.7 20v-4.300h12.600V20M18 0v4M18 11v9" stroke="#fff" strokeWidth="1.300" /><path d="M16.500 6h3v3.500h-3z" fill="#fff" />
      </Icon>
      <Icon w={28} h={28} className="ml-[40px]">
        <circle cx="14" cy="15" r="13" fill="#ff5a2a" /><path d="M18 1c6 3 10 8 9.500 15C27 24 20 28 14 28c8-3 11-9 9-15-1-5-5-6-5-12z" fill="#ffd43a" />
        <path d="M2 8c0 3 0 5 1 6 1 7 6 11 12 11l-1 3C6 28 1 22 1 15c0-3 0-5 1-7z" fill="#e62e5c" />
        <circle cx="14.500" cy="13.500" r="7.500" fill="#2b5fd9" /><path d="M7 8c4-1 6 1 6 3 2 0 4 1 4 2-2 0-3 2-5 3 2 1 5 2 8 0-1 4-5 6-9 5-4-1-6-7-4-13z" fill="#ff8a1f" />
      </Icon>
      <Task className="ml-[23px] w-[182px] pl-[12px]" icon={
        <Icon w={24} h={26} className="mr-[6px]">
          <path d="M0 0h16v23H6z" fill="#f5cf6c" /><path d="M0 0l6 5v21l-6-4z" fill="#fde7a5" />
          <path d="M13.500 9h5v8H23l-7 7-7-7h4.500z" fill="#2e94e6" />
        </Icon>
      }>Downloads</Task>
      <Icon w={30} h={30} className="ml-[21px] -mt-[2px]">
        <path d="M9 9V5c0-5 11-5 11 0v4M12 9V4c1-3 7-3 8 0" stroke="#ddd" strokeWidth="1.500" /><path d="M0 8h29v21H2c-1 0-2-1-2-2z" fill="#fff" />
        <path d="M8 12h6v6H8z" fill="#f25022" /><path d="M15 12h6v6h-6z" fill="#7fba00" /><path d="M8 19h6v6H8z" fill="#00a4ef" /><path d="M15 19h6v6h-6z" fill="#ffb900" />
      </Icon>
      <Icon w={44} h={34} className="ml-[31px] mt-[2px]">
        <path d="M0 7l15-7 15 7v18H0z" fill="#fff" /><path d="M2 8h26l-10 6-3 1z" fill="#33352b" /><path d="M11 13l14 9" stroke="#444" />
        <circle cx="31" cy="22" r="11.500" fill="#33352f" stroke="#aaa" /><text x="31" y="27" textAnchor="middle" fontSize="14" fontWeight="600" fill="#fff" fontFamily="Open Sans">43</text>
      </Icon>
      <Task className="ml-[7px] w-[182px] pl-[9px]" icon={
        <Icon w={27} h={27} className="mr-[6px]">
          <circle cx="13.500" cy="13.500" r="13.500" fill="#ffcd42" /><path d="M1.800 6.700A13.500 13.500 0 0 1 25.200 6.700H13.500z" fill="#db4437" />
          <path d="M1.800 6.700A13.500 13.500 0 0 0 12 27l7-10-5.500-3z" fill="#0f9d58" /><path d="M1.800 6.700l6 10 5.700-10H25L13.500 2z" fill="#db4437" /><path d="M1.800 6.700l6 10L13 20 12 27A13.500 13.500 0 0 1 1.800 6.700z" fill="#0f9d58" />
          <circle cx="13.500" cy="13.500" r="6.300" fill="#fff" /><circle cx="13.500" cy="13.500" r="5" fill="#4285f4" />
        </Icon>
      }>Homework Marke...</Task>
      <Task className="ml-[10px] w-[182px] pl-[11px]" icon={
        <Icon w={23} h={23} className="mr-[8px]"><path d="M0 0h23v12H12v11H0z" fill="#ffe500" /><path d="M12 23V12h11z" fill="#3a3a22" /></Icon>
      }>Sticky Notes</Task>
      <Task active className="ml-[5px] w-[191px] pl-[14px]" icon={<span className="mr-[6px]"><AccessLogo w={27} h={26} /></span>}>Access (Product A...</Task>
      <Icon w={16} h={9} className="ml-[16px]"><path d="M1 8l7-7 7 7" stroke="#fff" strokeWidth="1.500" /></Icon>
      <Icon w={22} h={14} className="ml-[21px]"><path d="M5 13a5 5 0 0 1 0-9c2-5 10-5 11 0 7 0 7 9 1 9z" fill="#ccc" /><path d="M4 14c-6-1-4-8 1-7l5-1 6 3c6 0 6 5 2 5z" fill="#fff" /></Icon>
      <Icon w={20} h={14} className="ml-[19px]"><path d="M6 3.500h12.500v9H4V8M19.500 6v4M1.500 0v3M4.500 0v3M0 3.500h6v2L4 7.500H2L.5 5.500z" stroke="#fff" strokeWidth="1.200" /><path d="M7 6h6v5H7z" fill="#fff" /></Icon>
      <Icon w={17} h={17} className="ml-[22px]"><path d="M1 16C1 8 8 1 16 1M5 16C5 10 10 5 16 5M9 16c0-4 3-7 7-7" stroke="#bbb" strokeWidth="1.300" /><circle cx="14.500" cy="15" r="1.500" fill="#fff" /></Icon>
      <Icon w={21} h={16} className="ml-[21px]"><path d="M.7 5.500h3L7.500 2v12L3.700 10.500h-3zM11 5c1.500 2 1.500 4 0 6M14 3c3 3 3 7 0 10M17 1c4 4 4 10 0 14" stroke="#fff" strokeWidth="1.200" /></Icon>
      <div className="w-[104px] text-center text-[14px] leading-[23px] text-white">7:09 PM<br />11/28/2019</div>
      <Icon w={21} h={20} className="ml-[4px]"><path d="M.7.700h19.600v14.600H14L10.500 19 7 15.300H.7z" stroke="#fff" strokeWidth="1.300" /></Icon>
      <span className="ml-[24px] h-full w-px bg-[#777]" />
    </div>
  );
}

export default function App() {
  return (
    <div className="flex h-[1080px] w-[1920px] flex-col overflow-hidden bg-white font-['Open_Sans',sans-serif]">
      <header className="relative">
        <CircuitArt />
        <TitleBar />
        <RibbonTabs />
      </header>
      <Ribbon />
      <main className="flex h-[831px] bg-[#f0f2f5]">
        <NavPane />
        <DocumentArea />
      </main>
      <StatusBar />
      <Taskbar />
    </div>
  );
}
